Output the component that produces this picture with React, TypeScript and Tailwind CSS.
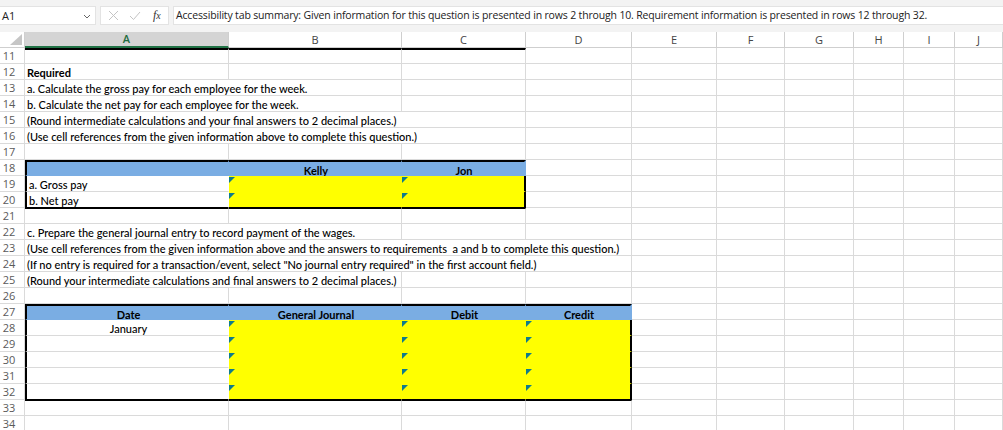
import React from "react";

const WC = [
  "w-[204px]",
  "w-[173px]",
  "w-[124px]",
  "w-[106px]",
  "w-[85px]",
  "w-[68px]",
  "w-[69px]",
  "w-[50px]",
  "w-[51px]",
  "w-[48px]",
];
const SPAN: Record<number, string> = {
  1: "w-[204px]",
  2: "w-[377px]",
  3: "w-[501px]",
  4: "w-[607px]",
};
const LETTERS = ["A", "B", "C", "D", "E", "F", "G", "H", "I", "J"];

const GRID = "h-full shrink-0 box-border border-r border-b border-[#dadada]";
const TXT =
  "pl-[2px] pt-[1px] whitespace-pre text-[11px] leading-[15px] text-black font-[500]";

type CellSpec = { w: string; cls?: string; content?: React.ReactNode };

function rest(from: number, extra = ""): CellSpec[] {
  const out: CellSpec[] = [];
  for (let i = from; i < 10; i++) out.push({ w: WC[i], cls: extra });
  return out;
}

function Row({ n, cells }: { n: number; cells: CellSpec[] }) {
  return (
    <div className="flex h-[16px] shrink-0">
      <div className="w-[25px] h-full shrink-0 box-border border-r border-b border-[#dadada] bg-white flex items-center">
        <span className="w-[18px] text-center text-[11px] leading-[16px] text-[#5a5a5a] font-['Open_Sans',sans-serif]">
          {n}
        </span>
      </div>
      {cells.map((c, i) => (
        <div key={i} className={`${GRID} ${c.w} ${c.cls ?? ""}`}>
          {c.content}
        </div>
      ))}
    </div>
  );
}

function Tri() {
  return (
    <div className="mt-[1px] w-[6px] h-[6px] bg-[#107c8c] [clip-path:polygon(0_0,100%_0,0_100%)]" />
  );
}

const text = (s: string, extra = "") => (
  <div className={`${TXT} ${extra}`}>{s}</div>
);

const HB = "bg-[#7aade3] border-r-transparent border-b-transparent border-t-2 border-t-black";

export default function App() {
  const red = "text-[#c00000]";

  const t1Header = (): CellSpec[] => [
    { w: WC[0], cls: `${HB} border-l-2 border-l-black` },
    { w: WC[1], cls: HB, content: text("Kelly", "text-center font-bold pl-0") },
    {
      w: WC[2],
      cls: `${HB} border-r-2 border-r-black`,
      content: text("Jon", "text-center font-bold pl-0"),
    },
    ...rest(3),
  ];
  const t1Row = (label: string, last: boolean): CellSpec[] => [
    {
      w: WC[0],
      cls: `bg-white border-l-2 border-l-black border-r-transparent ${last ? "border-b-black" : ""}`,
      content: text(label, "pl-[1px]"),
    },
    {
      w: WC[1],
      cls: `bg-[#ffff00] border-r-transparent ${last ? "border-b-black" : "border-b-transparent"}`,
      content: <Tri />,
    },
    {
      w: WC[2],
      cls: `bg-[#ffff00] border-r-2 border-r-black ${last ? "border-b-black" : "border-b-transparent"}`,
      content: <Tri />,
    },
    ...rest(3),
  ];

  const t2Header = (): CellSpec[] => [
    {
      w: WC[0],
      cls: `${HB} border-l-2 border-l-black`,
      content: text("Date", "text-center font-bold pl-0"),
    },
    { w: WC[1], cls: HB, content: text("General Journal", "text-center font-bold pl-0") },
    { w: WC[2], cls: HB, content: text("Debit", "text-center font-bold pl-0") },
    {
      w: WC[3],
      cls: `${HB} border-r-2 border-r-black`,
      content: text("Credit", "text-center font-bold pl-0"),
    },
    ...rest(4),
  ];
  const t2Row = (label: string, last: boolean): CellSpec[] => [
    {
      w: WC[0],
      cls: `bg-white border-l-2 border-l-black border-r-transparent ${last ? "border-b-black" : ""}`,
      content: label ? text(label, "text-center pl-0") : null,
    },
    {
      w: WC[1],
      cls: `bg-[#ffff00] border-r-transparent ${last ? "border-b-black" : "border-b-transparent"}`,
      content: <Tri />,
    },
    {
      w: WC[2],
      cls: `bg-[#ffff00] border-r-transparent ${last ? "border-b-black" : "border-b-transparent"}`,
      content: <Tri />,
    },
    {
      w: WC[3],
      cls: `bg-[#ffff00] border-r-2 border-r-black ${last ? "border-b-black" : "border-b-transparent"}`,
      content: <Tri />,
    },
    ...rest(4),
  ];

  const spanRow = (span: number, s: string, extra = ""): CellSpec[] => [
    { w: SPAN[span], content: text(s, extra) },
    ...rest(span),
  ];

  const underTable = (n: number): CellSpec[] => {
    const out: CellSpec[] = [];
    for (let i = 0; i < 10; i++)
      out.push({ w: WC[i], cls: i < n ? "border-t border-t-black" : "" });
    return out;
  };

  const rows: [number, CellSpec[]][] = [
    [
      11,
      [
        { w: WC[0], cls: "border-t-2 border-t-black" },
        { w: WC[1], cls: "border-t-2 border-t-black" },
        { w: WC[2], cls: "border-t-2 border-t-black" },
        ...rest(3),
      ],
    ],
    [12, spanRow(1, "Required", "font-bold")],
    [13, spanRow(2, "a. Calculate the gross pay for each employee for the week.")],
    [14, spanRow(2, "b. Calculate the net pay for each employee for the week.")],
    [15, spanRow(3, "(Round intermediate calculations and your final answers to 2 decimal places.)", red)],
    [16, spanRow(3, "(Use cell references from the given information above to complete this question.)", red)],
    [17, rest(0)],
    [18, t1Header()],
    [19, t1Row("a. Gross pay", false)],
    [20, t1Row("b. Net pay", true)],
    [21, underTable(3)],
    [22, spanRow(2, "c. Prepare the general journal entry to record payment of the wages.")],
    [23, spanRow(4, "(Use cell references from the given information above and the answers to requirements  a and b to complete this question.)", red)],
    [24, spanRow(4, "(If no entry is required for a transaction/event, select \"No journal entry required\" in the first account field.)", red)],
    [25, spanRow(2, "(Round your intermediate calculations and final answers to 2 decimal places.)", red)],
    [26, rest(0)],
    [27, t2Header()],
    [28, t2Row("January", false)],
    [29, t2Row("", false)],
    [30, t2Row("", false)],
    [31, t2Row("", false)],
    [32, t2Row("", true)],
    [33, underTable(4)],
    [34, rest(0)],
  ];

  return (
    <div className="w-[1003px] h-[430px] overflow-hidden bg-white flex flex-col font-['Lato',sans-serif]">
      {/* Formula bar */}
      <div className="h-[32px] shrink-0 bg-[#f3f3f3] flex items-start pt-[6px] font-['Open_Sans',sans-serif]">
        <div className="w-[96px] shrink-0 h-[19px] bg-white box-border border border-[#e3e3e3] border-l-0 flex items-center justify-between pl-[2px] pr-[4px]">
          <span className="text-[11px] leading-[17px] text-[#222]">A1</span>
          <svg width="8" height="5" viewBox="0 0 8 5" className="mt-[1px]">
            <path d="M1 1 L4 4 L7 1" fill="none" stroke="#666" strokeWidth="1" />
          </svg>
        </div>
        <div className="ml-[4px] shrink-0 w-[69px] h-[19px] bg-white box-border border border-[#e3e3e3] flex items-center">
          <svg width="11" height="11" viewBox="0 0 11 11" className="ml-[7px]">
            <path d="M1 1 L10 10 M10 1 L1 10" stroke="#c4c4c4" strokeWidth="1" />
          </svg>
          <svg width="12" height="10" viewBox="0 0 12 10" className="ml-[10px]">
            <path d="M1 5 L4.5 8.5 L11 1" fill="none" stroke="#c4c4c4" strokeWidth="1" />
          </svg>
          <span className="ml-[12px] text-[12px] leading-[17px] italic text-[#333] font-['Liberation_Serif',serif]">
            f<span className="text-[10px]">x</span>
          </span>
        </div>
        <div className="ml-[4px] flex-1 min-w-0 overflow-hidden h-[19px] bg-white box-border border border-[#e3e3e3] border-r-0 flex items-center pl-[2px]">
          <span className="text-[10.5px] tracking-[-0.16px] leading-[17px] text-[#222] whitespace-nowrap">
            Accessibility tab summary: Given information for this question is presented in rows 2 through 10. Requirement information is presented in rows 12 through 32.
          </span>
        </div>
      </div>

      {/* Column headers */}
      <div className="flex h-[16px] shrink-0 font-['Open_Sans',sans-serif]">
        <div className="w-[25px] h-full shrink-0 box-border border-r border-b border-[#cfcfcf] bg-white flex items-end justify-end pr-[2px] pb-[2px]">
          <div className="w-[12px] h-[11px] bg-[#c6c6c6] [clip-path:polygon(100%_0,100%_100%,0_100%)]" />
        </div>
        {LETTERS.map((l, i) =>
          i === 0 ? (
            <div
              key={l}
              className={`${WC[i]} h-full shrink-0 box-border border-r border-[#cfcfcf] border-b-2 border-b-[#217346] bg-[#d4d4d4] flex items-center justify-center text-[11px] leading-[14px] font-semibold text-[#1e6b3f]`}
            >
              {l}
            </div>
          ) : (
            <div
              key={l}
              className={`${WC[i]} h-full shrink-0 box-border border-r border-b border-[#cfcfcf] bg-white flex items-center justify-center text-[11px] leading-[14px] text-[#444]`}
            >
              {l}
            </div>
          )
        )}
      </div>

      {/* Rows */}
      {rows.map(([n, cells]) => (
        <Row key={n} n={n} cells={cells} />
      ))}
    </div>
  );
}
